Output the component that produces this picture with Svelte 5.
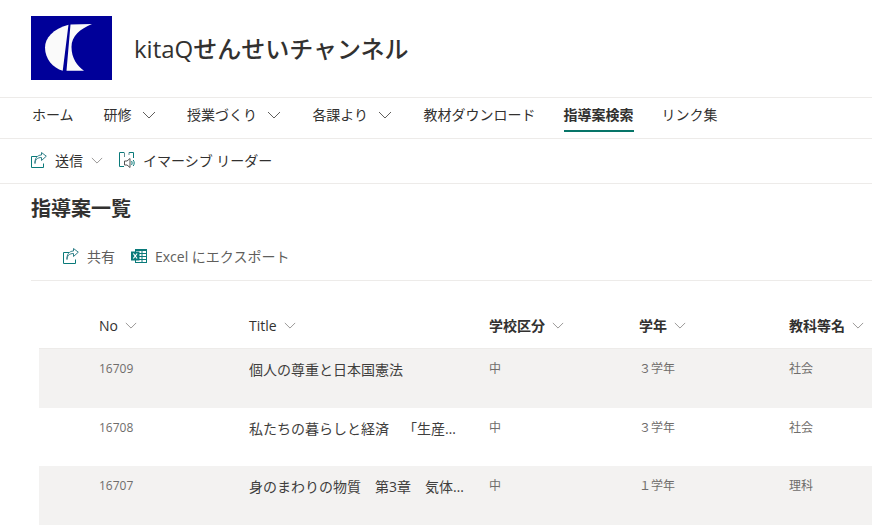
<script>
  const nav = [
    { t: 'ホーム' },
    { t: '研修', c: true },
    { t: '授業づくり', c: true },
    { t: '各課より', c: true },
    { t: '教材ダウンロード' },
    { t: '指導案検索', active: true },
    { t: 'リンク集' }
  ];
  const cols = ['No', 'Title', '学校区分', '学年', '教科等名'];
  const rows = [
    ['16709', '個人の尊重と日本国憲法', '中', '３学年', '社会'],
    ['16708', '私たちの暮らしと経済　「生産と労働」について', '中', '３学年', '社会'],
    ['16707', '身のまわりの物質　第3章　気体の性質について', '中', '１学年', '理科']
  ];
</script>

{#snippet chevron(cls)}
  <svg class={cls} viewBox="0 0 14 8" aria-hidden="true"><path d="M1 1l6 6 6-6" fill="none" stroke="currentColor" stroke-width="1"/></svg>
{/snippet}

{#snippet share()}
  <svg class="ico" viewBox="0 0 16 16" aria-hidden="true">
    <path d="M6 4.500H0.500v11h12v-4" fill="none" stroke="#0a7a7a" stroke-width="1"/>
    <path d="M4 11.500C4 7.500 6.500 5.500 10.500 5.500V8.500L15.300 4.200 10.500 0.500V3C6 3 3.500 7 4 11.500z" fill="none" stroke="#2f7f88" stroke-width="1"/>
  </svg>
{/snippet}

<div class="page">
  <header class="site">
    <svg class="logo" viewBox="0 0 81 64" aria-hidden="true">
      <rect width="81" height="64" fill="#000099"/>
      <path d="M37.500 8.700C22 13 14 22 14 31.500 14 43 22 52 31.700 54.800z" fill="#fafafa"/>
      <path d="M39.500 8.500L61 8C49 13 40.500 20 40.500 31 40.500 42 46 50 53 54.800L35.500 54.800z" fill="#fafafa"/>
    </svg>
    <h1>kitaQせんせいチャンネル</h1>
  </header>

  <nav class="nav">
    {#each nav as n}
      <div class="nav-item" class:active={n.active}>
        <span>{n.t}</span>
        {#if n.c}{@render chevron('nav-chev')}{/if}
      </div>
    {/each}
  </nav>

  <div class="cmd">
    <div class="cmd-item">
      {@render share()}
      <span>送信</span>
      {@render chevron('cmd-chev')}
    </div>
    <div class="cmd-item">
      <svg class="ico" viewBox="0 0 16 16" aria-hidden="true">
        <path d="M5 .5H.5v14H5M10 .5h4.500V6" fill="none" stroke="#0a7a7a" stroke-width="1"/>
        <path d="M5.500 .5V5M10 .5V3" fill="none" stroke="#5f8f94" stroke-width="1"/>
        <path d="M5.500 9H8l3-2.500v9L8 13H5.500z" fill="none" stroke="#555" stroke-width="1"/>
        <path d="M12.500 9c.8 1 .8 3 0 4M14.200 8c1.300 1.500 1.300 4.500 0 6" fill="none" stroke="#0a7a7a" stroke-width="1"/>
      </svg>
      <span>イマーシブ リーダー</span>
    </div>
  </div>

  <h2>指導案一覧</h2>

  <div class="tools">
    <div class="tool">
      {@render share()}
      <span>共有</span>
    </div>
    <div class="tool">
      <svg class="ico" viewBox="0 0 16 16" aria-hidden="true">
        <rect x="4.500" y="1.500" width="11" height="13" fill="#fff" stroke="#0a7a7a"/>
        <path d="M4.500 2h11" stroke="#0a7a7a" stroke-width="2" fill="none"/>
        <path d="M8 5.500h7.500M8 8.500h7.500M8 11.500h7.500M11 2v12" stroke="#0a7a7a" fill="none"/>
        <rect x="0" y="3.500" width="8.500" height="9" fill="#0a7a7a"/>
        <path d="M2.300 5.500l3.800 5M6.100 5.500l-3.800 5" stroke="#fff" stroke-width="1.200" fill="none"/>
      </svg>
      <span>Excel にエクスポート</span>
    </div>
  </div>

  <div class="list">
    <div class="head row-grid">
      {#each cols as c}
        <div class="hcell">
          <span>{c}</span>
          {@render chevron('h-chev')}
        </div>
      {/each}
    </div>
    {#each rows as r, i}
      <div class="row row-grid" class:shade={i % 2 === 0}>
        {#each r as v, j}
          <div class="cell" class:title={j === 1}>{v}</div>
        {/each}
      </div>
    {/each}
  </div>
</div>

<style>
  :global(body) {
    margin: 0;
    background: #fff;
    overflow: hidden;
  }
  .page {
    width: 872px;
    height: 525px;
    overflow: hidden;
    font-family: "Open Sans", "Noto Sans CJK JP", sans-serif;
    color: #323130;
    font-size: 14px;
    text-spacing-trim: space-all;
  }
  .site {
    display: flex;
    align-items: center;
    height: 97px;
    padding-left: 31px;
    border-bottom: 1px solid #edebe9;
  }
  .logo {
    width: 81px;
    height: 64px;
    display: block;
    margin-bottom: 2px;
  }
  h1 {
    margin: 0 0 0 22px;
    font-size: 24px;
    font-weight: 500;
    line-height: 32px;
    white-space: nowrap;
  }
  .nav {
    display: flex;
    gap: 28px;
    height: 40px;
    padding-left: 32px;
    border-bottom: 1px solid #edebe9;
  }
  .nav-item {
    display: flex;
    align-items: center;
    height: 34px;
    box-sizing: border-box;
    border-bottom: 2px solid transparent;
    white-space: nowrap;
  }
  .nav-item:first-child {
    margin-right: 2px;
  }
  .nav-item.active {
    font-weight: 700;
    border-bottom-color: #077568;
  }
  .nav-chev {
    width: 14px;
    height: 8px;
    margin: 2px 3.4px 0 10px;
    color: #605e5c;
  }
  .cmd {
    display: flex;
    align-items: center;
    gap: 16px;
    height: 45px;
    padding: 0 0 2px 31px;
    box-sizing: border-box;
    border-bottom: 1px solid #edebe9;
  }
  .cmd-item {
    display: flex;
    align-items: center;
    white-space: nowrap;
  }
  .ico {
    width: 16px;
    height: 16px;
    margin-right: 8px;
    flex: none;
  }
  .cmd-chev {
    width: 12px;
    height: 7px;
    margin-left: 8px;
    color: #8a8886;
  }
  h2 {
    margin: 0;
    padding: 11px 0 0 31px;
    font-size: 20px;
    font-weight: 700;
    line-height: 28px;
    color: #323130;
  }
  .tools {
    display: flex;
    align-items: center;
    gap: 16px;
    height: 40px;
    margin: 13px 0 0 31px;
    padding: 0 0 4px 32px;
    border-bottom: 1px solid #edebe9;
    font-size: 14px;
    color: #605e5c;
  }
  .tool {
    display: flex;
    align-items: center;
    white-space: nowrap;
  }
  .list {
    margin: 23px 0 0 39px;
    width: 900px;
  }
  .row-grid {
    display: grid;
    grid-template-columns: 150px 240px 150px 150px 150px;
    padding-left: 60px;
  }
  .head {
    height: 42px;
    padding-bottom: 2px;
    align-items: center;
    border-bottom: 1px solid #edebe9;
  }
  .hcell {
    display: flex;
    align-items: center;
    font-weight: 600;
    font-size: 14px;
    white-space: nowrap;
  }
  .hcell:nth-child(-n+2) {
    font-weight: 500;
  }
  .h-chev {
    width: 12px;
    height: 7px;
    margin-left: 7px;
    color: #8a8886;
  }
  .row {
    height: 58.7px;
    box-sizing: border-box;
    padding-top: 11px;
    font-size: 12px;
    color: #6f6d6b;
    align-items: start;
  }
  .row.shade {
    background: #f3f2f1;
  }
  .cell {
    line-height: 18px;
    white-space: nowrap;
  }
  .cell.title {
    font-size: 14px;
    line-height: 20px;
    color: #3f3e3d;
    width: 218px;
    overflow: hidden;
    text-overflow: ellipsis;
  }
</style>
